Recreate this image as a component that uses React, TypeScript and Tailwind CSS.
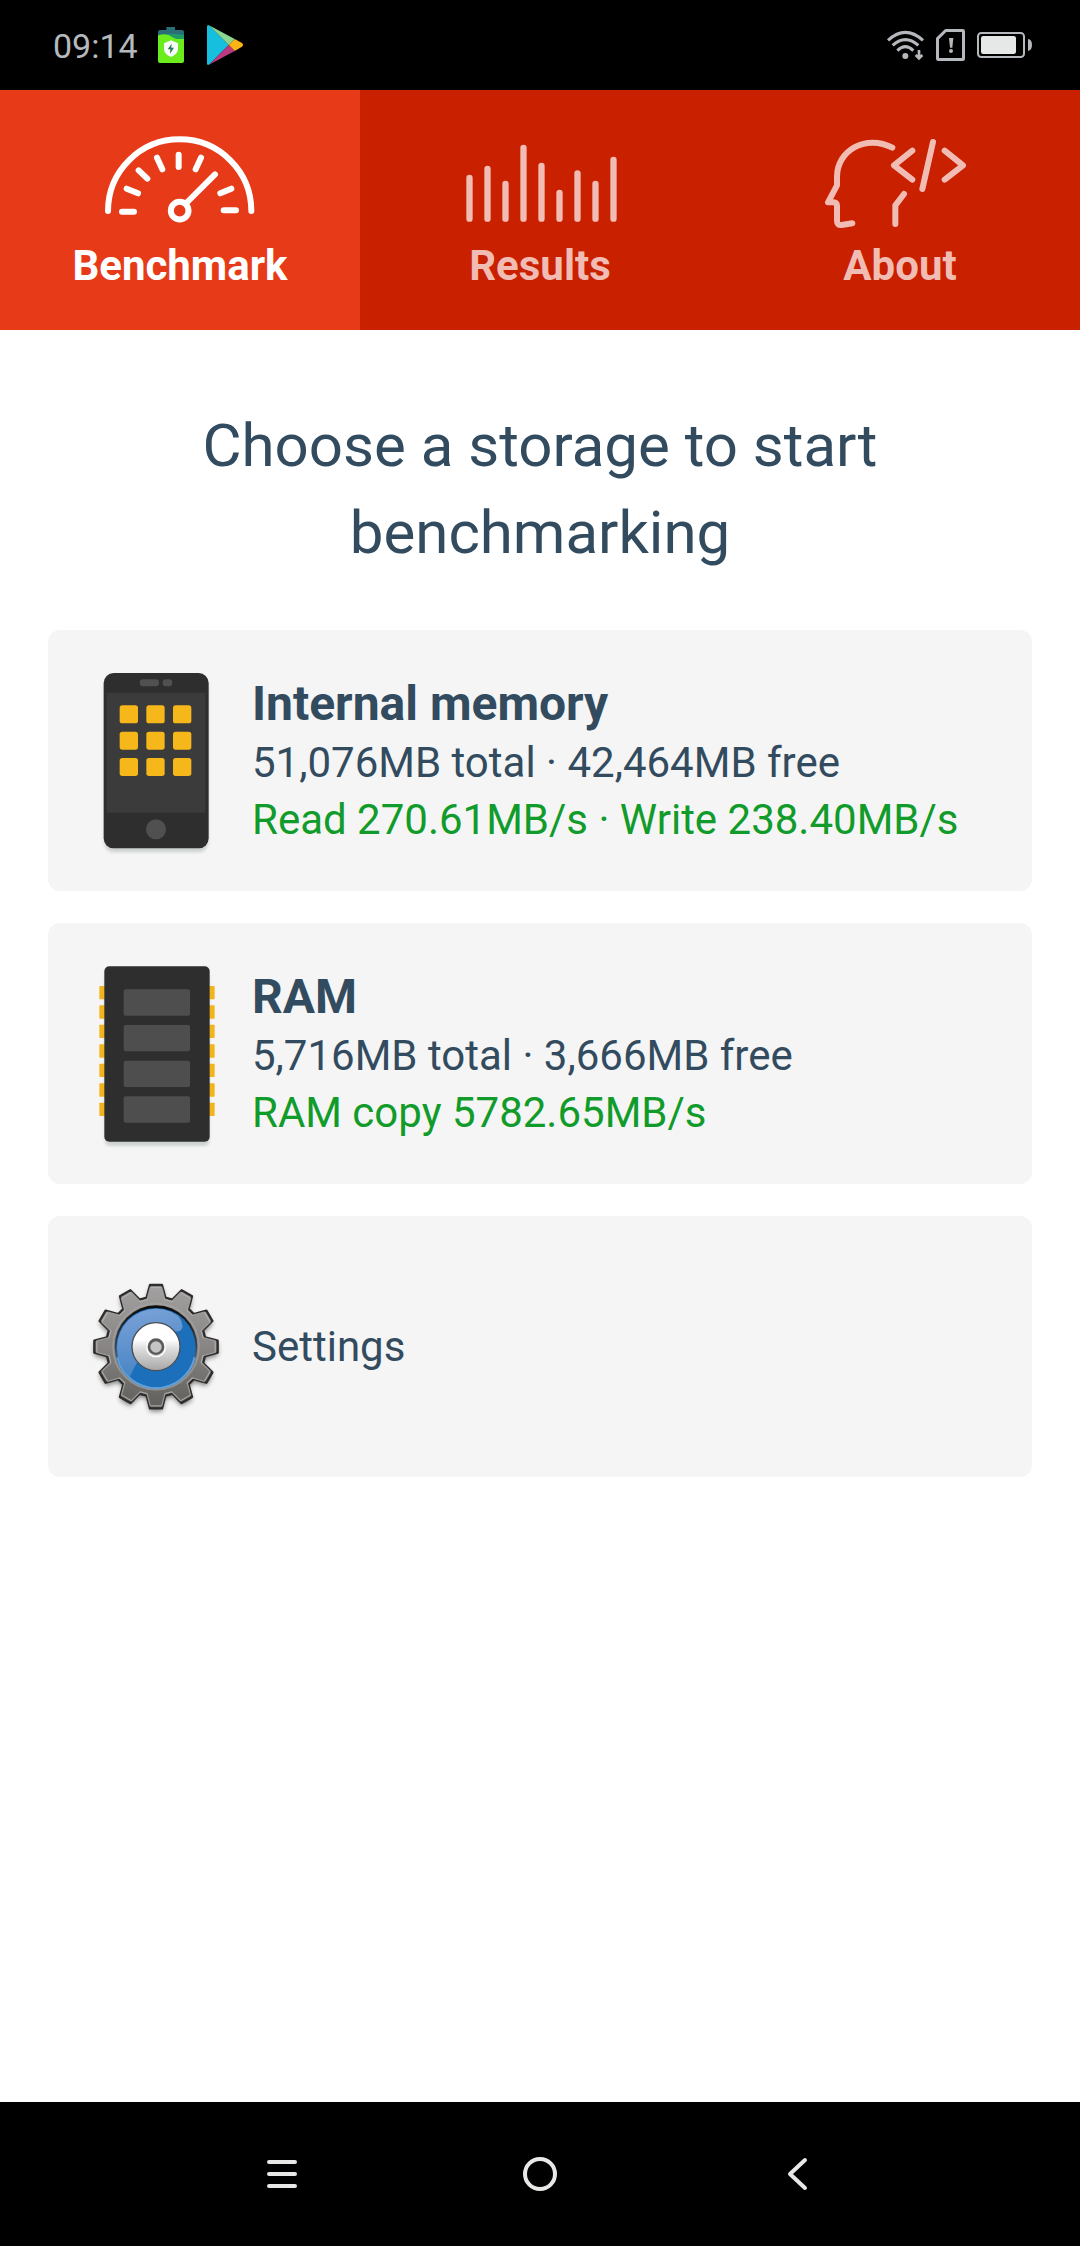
import { useState, type ReactNode } from "react";

type TabId = "benchmark" | "results" | "about";

const BAR_TOPS = [279, 252, 297, 189, 243, 324, 265, 297, 225];

function GaugeIcon() {
  return (
    <svg viewBox="270 147 540 288" className="w-[180px] h-24" fill="none" stroke="currentColor" strokeWidth="18" strokeLinecap="round" strokeLinejoin="round" aria-hidden="true">
      <path d="M324 378A215 215 0 0 1 754 378" />
      <path d="M366 380H402M380 311L414 325M416 256L442 281M471 218L487 253M536 209V246M603 218L587 253M694 311L661 325M671 376H708" />
      <path d="M645 268L559 354" />
      <circle cx="539" cy="377" r="26.5" />
    </svg>
  );
}

function BarsIcon() {
  return (
    <svg viewBox="270 147 540 288" className="w-[180px] h-24" fill="none" stroke="currentColor" strokeWidth="19" strokeLinecap="round" aria-hidden="true">
      {BAR_TOPS.map((top, i) => (
        <path key={i} d={`M${328.5 + i * 54} ${top}V401`} />
      ))}
    </svg>
  );
}

function DeveloperIcon() {
  return (
    <svg viewBox="270 147 540 288" className="w-[180px] h-24" fill="none" stroke="currentColor" strokeWidth="18" strokeLinecap="round" strokeLinejoin="round" aria-hidden="true">
      <path d="M517 188C438 146 351 197 351 275V301L324 352H340Q351 352 351 363V407Q351 422 365 420L397 415" />
      <path d="M552 327L526 361V417" />
      <path d="M577 197L522 241L577 284M639 171L607 312M674 197L729 241L674 284" />
    </svg>
  );
}

function PhoneIcon() {
  return (
    <svg viewBox="132 134 432 576" className="w-36 h-48 shrink-0" aria-hidden="true">
      <defs>
        <filter id="phone-shadow" x="-20%" y="-20%" width="140%" height="140%">
          <feGaussianBlur stdDeviation="5" />
        </filter>
      </defs>
      <rect x="192" y="172" width="313" height="524" rx="30" fill="#cdd3d1" filter="url(#phone-shadow)" />
      <rect x="191" y="158" width="315" height="526" rx="30" fill="#2e2e2e" />
      <rect x="200" y="217" width="296" height="360" fill="#3b3b3b" />
      <rect x="299" y="177" width="58" height="21" rx="10" fill="#505050" />
      <rect x="368" y="177" width="29" height="21" rx="10" fill="#505050" />
      {[255, 334, 413].map((y) =>
        [239, 319, 399].map((x) => (
          <rect key={`${x}-${y}`} x={x} y={y} width="55" height="54" rx="8" fill="#f5b71a" />
        ))
      )}
      <circle cx="348" cy="627" r="30" fill="#505050" />
    </svg>
  );
}

function RamIcon() {
  return (
    <svg viewBox="132 142 432 576" className="w-36 h-48 shrink-0" aria-hidden="true">
      <defs>
        <filter id="ram-shadow" x="-20%" y="-20%" width="140%" height="140%">
          <feGaussianBlur stdDeviation="5" />
        </filter>
      </defs>
      <rect x="194" y="180" width="314" height="526" rx="16" fill="#cdd3d1" filter="url(#ram-shadow)" />
      {[226, 284, 342, 401, 459, 518, 576].map((y) => (
        <rect key={y} x="178" y={y} width="346" height="40" rx="2" fill="#f2b41c" />
      ))}
      <rect x="193" y="167" width="316" height="526" rx="15" fill="#2e2e2e" />
      {[236, 343, 450, 557].map((y) => (
        <rect key={y} x="251" y={y} width="199" height="79" rx="6" fill="#4e4e4e" />
      ))}
    </svg>
  );
}

// Outline of a cog with 12 trapezoid teeth, centred on 0,0
function cogPath() {
  const points: string[] = [];
  for (let i = 0; i < 12; i++) {
    const a = (i * Math.PI) / 6;
    for (const [x, y] of [[-28, -147], [-18, -185], [18, -185], [28, -147]]) {
      const px = x * Math.cos(a) - y * Math.sin(a);
      const py = x * Math.sin(a) + y * Math.cos(a);
      points.push(`${px.toFixed(1)} ${py.toFixed(1)}`);
    }
  }
  return `M${points.join("L")}Z`;
}

const COG = cogPath();

function SettingsIcon() {
  return (
    <svg viewBox="-216 -287 432 576" className="w-36 h-48 shrink-0" aria-hidden="true">
      <defs>
        <linearGradient id="cog-body" x1="0" y1="0" x2="0" y2="1">
          <stop offset="0" stopColor="#a3a1a1" />
          <stop offset="0.5" stopColor="#888584" />
          <stop offset="1" stopColor="#5f5e5a" />
        </linearGradient>
        <linearGradient id="cog-hub" x1="0" y1="0" x2="0" y2="1">
          <stop offset="0.35" stopColor="#ffffff" />
          <stop offset="0.55" stopColor="#dcdcdc" />
          <stop offset="1" stopColor="#a6a6a6" />
        </linearGradient>
        <linearGradient id="cog-rim" x1="0" y1="0" x2="0" y2="1">
          <stop offset="0" stopColor="#0a0a0a" />
          <stop offset="0.5" stopColor="#3c4650" />
          <stop offset="1" stopColor="#7fa3c8" />
        </linearGradient>
        <linearGradient id="cog-gloss" x1="0.3" y1="0" x2="0.5" y2="1">
          <stop offset="0" stopColor="#7ea4d8" />
          <stop offset="1" stopColor="#4683c4" />
        </linearGradient>
        <filter id="cog-shadow" x="-20%" y="-20%" width="140%" height="140%">
          <feGaussianBlur stdDeviation="8" />
        </filter>
        <clipPath id="cog-disc">
          <circle r="117" cy="3" />
        </clipPath>
      </defs>
      <path d={COG} transform="translate(0 9)" fill="#000000" opacity="0.5" filter="url(#cog-shadow)" />
      <path d={COG} fill="url(#cog-body)" stroke="#2e2d2c" strokeWidth="7" strokeLinejoin="round" />
      <path d={COG} transform="scale(0.96)" fill="none" stroke="#b5b3b2" strokeWidth="4" strokeLinejoin="round" opacity="0.8" />
      <circle r="129" fill="none" stroke="#a5a3a2" strokeWidth="5" opacity="0.7" />
      <circle r="124" fill="url(#cog-rim)" />
      <circle r="119" cy="3" fill="#1c6fbb" />
      <g clipPath="url(#cog-disc)">
        <path d="M-82 96L-42 18L60 -46Q76 -44 80 -60Q76 -96 40 -112L0 -130L-140 -60V60Z" fill="url(#cog-gloss)" />
      </g>
      <path d="M-116 32A119 119 0 0 0 116 32" fill="none" stroke="#5da0dc" strokeWidth="6" />
      <circle r="72" fill="url(#cog-hub)" stroke="#4c4f55" strokeWidth="4" />
      <circle r="28" cy="2" fill="none" stroke="#ffffff" strokeWidth="4" />
      <circle r="25" fill="#5a5a5a" />
      <circle r="17" cy="1" fill="#c4c4c4" />
    </svg>
  );
}

function StatusBar() {
  return (
    <header className="flex items-center justify-between h-[90px] pl-[53px] pr-12 bg-black text-[#b5b8bc]">
      <div className="flex items-center">
        <time className="text-[34px] leading-10 pt-[2px]">09:14</time>
        <svg viewBox="474 81 78 108" className="w-[26px] h-9 ml-5" role="img" aria-label="Battery saver">
          <path d="M499 81H525V90H546Q552 90 552 96V120H474V96Q474 90 480 90H499Z" fill="#286f78" />
          <path d="M474 106Q500 98 516 110Q532 120 552 115V183Q552 189 546 189H480Q474 189 474 183Z" fill="#6bec1c" />
          <path d="M490 103Q520 100 552 104V116Q530 120 516 110Q504 102 490 103Z" fill="#1f9c66" />
          <path d="M513 121L534 130V148Q532 163 513 171Q493 163 492 148V130Z" fill="#f8fbf8" />
          <path d="M515 131L503 148H511L510 161L522 143H514Z" fill="#2a7a5c" />
        </svg>
        <svg viewBox="621 75 108 120" className="w-9 h-10 ml-[23px]" role="img" aria-label="Play Store">
          <path d="M621 79Q621 74 627 76L686 135L627 194Q621 196 621 191Z" fill="#17bfdf" />
          <path d="M627 76L704 117L686 135Z" fill="#8bd693" />
          <path d="M704 117L726 129Q732 134 726 140L704 153L686 135Z" fill="#fbb416" />
          <path d="M627 194L704 153L686 135Z" fill="#bd3a82" />
        </svg>
      </div>
      <div className="flex items-center gap-3">
        <svg viewBox="141 87 111 96" className="w-[37px] h-8" fill="none" stroke="currentColor" strokeWidth="9" role="img" aria-label="Wi-Fi">
          <path d="M144 121Q196 73 249 121M158 136Q196 102 235 136M172 152Q196 128 220 152" />
          <circle cx="196" cy="168" r="9" fill="currentColor" stroke="none" />
          <path d="M237 150V174M227 165L237 175L247 165" strokeWidth="8" />
        </svg>
        <svg viewBox="288 87 87 96" className="w-[29px] h-8" fill="none" stroke="currentColor" strokeWidth="9" strokeLinejoin="round" role="img" aria-label="SIM card problem">
          <path d="M317 91.5H368Q370.500 91.500 370.500 94V176Q370.500 178.500 368 178.500H295Q292.500 178.500 292.500 176V116Z" />
          <path d="M327 114H340L337 143H330Z" fill="currentColor" stroke="none" />
          <circle cx="333" cy="153" r="6" fill="currentColor" stroke="none" />
        </svg>
        <svg viewBox="411 96 165 78" className="w-[55px] h-[26px]" role="img" aria-label="Battery">
          <rect x="414" y="99" width="138" height="72" rx="10" fill="none" stroke="currentColor" strokeWidth="6" />
          <rect x="423" y="108" width="105" height="54" rx="7" fill="#e6e8e7" />
          <path d="M564 117Q576 119 576 135Q576 151 564 153Z" fill="currentColor" />
        </svg>
      </div>
    </header>
  );
}

const TABS: { id: TabId; label: string; icon: ReactNode }[] = [
  { id: "benchmark", label: "Benchmark", icon: <GaugeIcon /> },
  { id: "results", label: "Results", icon: <BarsIcon /> },
  { id: "about", label: "About", icon: <DeveloperIcon /> },
];

function StorageCard({ icon, children }: { icon: ReactNode; children: ReactNode }) {
  return (
    <button className="flex items-center gap-6 w-full min-h-[261px] px-9 rounded-xl bg-[#f5f5f5] text-left text-[42px] leading-[57px]">
      {icon}
      <span className="flex flex-col">{children}</span>
    </button>
  );
}

export default function App() {
  const [activeTab, setActiveTab] = useState<TabId>("benchmark");

  return (
    <div className="flex flex-col min-h-screen bg-white text-[#324b5f] font-[Roboto,sans-serif]">
      <StatusBar />

      <nav className="grid grid-cols-3 bg-[#c92000]">
        {TABS.map((tab) => (
          <button
            key={tab.id}
            onClick={() => setActiveTab(tab.id)}
            className={`flex flex-col items-center gap-2 h-60 pt-11 text-[42px] leading-[56px] font-bold ${
              activeTab === tab.id ? "bg-[#e73a19] text-white" : "text-[#f1bcb3]"
            }`}
          >
            {tab.icon}
            <span>{tab.label}</span>
          </button>
        ))}
      </nav>

      <main className="flex-1 px-12 pt-[72px]">
        <h1 className="max-w-[800px] mx-auto text-center text-[60px] leading-[87px]">
          Choose a storage to start benchmarking
        </h1>

        <div className="flex flex-col gap-8 mt-[54px]">
          <StorageCard icon={<PhoneIcon />}>
            <span className="text-[48px] leading-[61px] font-bold">Internal memory</span>
            <span>51,076MB total · 42,464MB free</span>
            <span className="text-[#119b2a]">Read 270.61MB/s · Write 238.40MB/s</span>
          </StorageCard>
          <StorageCard icon={<RamIcon />}>
            <span className="text-[48px] leading-[61px] font-bold">RAM</span>
            <span>5,716MB total · 3,666MB free</span>
            <span className="text-[#119b2a]">RAM copy 5782.65MB/s</span>
          </StorageCard>
          <StorageCard icon={<SettingsIcon />}>
            <span>Settings</span>
          </StorageCard>
        </div>
      </main>

      <footer className="grid grid-cols-3 h-36 px-[153px] bg-black text-[#e8e8e6]">
        <button aria-label="Recent apps" className="flex items-center justify-center">
          <svg viewBox="0 0 36 36" className="size-9" stroke="currentColor" strokeWidth="4" strokeLinecap="round">
            <path d="M5 6H31M5 18H31M5 30H31" />
          </svg>
        </button>
        <button aria-label="Home" className="flex items-center justify-center">
          <svg viewBox="0 0 36 36" className="size-9" fill="none" stroke="currentColor" strokeWidth="4">
            <circle cx="18" cy="18" r="15" />
          </svg>
        </button>
        <button aria-label="Back" className="flex items-center justify-center">
          <svg viewBox="0 0 36 36" className="size-9" fill="none" stroke="currentColor" strokeWidth="4" strokeLinecap="round" strokeLinejoin="round">
            <path d="M25 4L10 18L25 32" />
          </svg>
        </button>
      </footer>
    </div>
  );
}
